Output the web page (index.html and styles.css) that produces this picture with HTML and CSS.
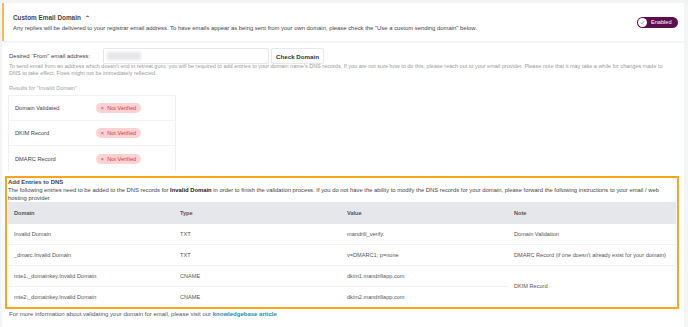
FILE: index.html
```html
<!doctype html>
<html lang="en">
<head>
    <meta charset="UTF-8">
    <title>Custom Email Domain</title>
    <link rel="stylesheet" href="styles.css">
</head>
<body>
    <div class="card top">
        <div class="top-text">
            <div class="title">Custom Email Domain <span class="caret">&#x2303;</span></div>
            <p class="lead">Any replies will be delivered to your registrar email address. To have emails appear as being sent from your own domain, please check the "Use a custom sending domain" below.</p>
        </div>
        <div class="toggle">
            <span class="knob">
                <svg width="7" height="7" viewBox="0 0 8 8"><path d="M2 4.2 L3.4 5.6 L6 2.6" fill="none" stroke="#9a8aa0" stroke-width="0.9"/></svg>
            </span>
            <span>Enabled</span>
        </div>
    </div>

    <div class="card panel">
        <div class="from-row">
            <label>Desired &ldquo;From&rdquo; email address:</label>
            <div class="input"><span class="blur"></span></div>
            <button class="btn">Check Domain</button>
        </div>
        <p class="help">To send email from an address which doesn't end in retreat.guru, you will be required to add entries to your domain name's DNS records. If you are not sure how to do this, please reach out to your email provider. Please note that it may take a while for changes made to DNS to take effect. Fixes might not be immediately reflected.</p>
        <p class="results-for">Results for "Invalid Domain"</p>

        <ul class="results">
            <li><span class="label">Domain Validated</span><span class="badge">&times;&nbsp; Not Verified</span></li>
            <li><span class="label">DKIM Record</span><span class="badge">&times;&nbsp; Not Verified</span></li>
            <li><span class="label">DMARC Record</span><span class="badge">&times;&nbsp; Not Verified</span></li>
        </ul>

        <div class="dns">
            <div class="dns-title">Add Entries to DNS</div>
            <p class="dns-desc">The following entries need to be added to the DNS records for <b>Invalid Domain</b> in order to finish the validation process. If you do not have the ability to modify the DNS records for your domain, please forward the following instructions to your email / web hosting provider.</p>
            <table>
                <thead>
                    <tr><th class="c1">Domain</th><th class="c2">Type</th><th class="c3">Value</th><th>Note</th></tr>
                </thead>
                <tbody>
                    <tr><td>Invalid Domain</td><td>TXT</td><td>mandrill_verify.</td><td>Domain Validation</td></tr>
                    <tr><td>_dmarc.Invalid Domain</td><td>TXT</td><td>v=DMARC1; p=none</td><td>DMARC Record (if one doesn't already exist for your domain)</td></tr>
                    <tr><td>mte1._domainkey.Invalid Domain</td><td>CNAME</td><td>dkim1.mandrillapp.com</td><td rowspan="2">DKIM Record</td></tr>
                    <tr><td>mte2._domainkey.Invalid Domain</td><td>CNAME</td><td>dkim2.mandrillapp.com</td></tr>
                </tbody>
            </table>
        </div>
        <p class="more">For more information about validating your domain for email, please visit our <a href="">knowledgebase article</a></p>
    </div>
</body>
</html>
```

FILE: styles.css
```css
*{
    margin:0;
    padding:0;
    box-sizing:border-box;
}
html,body{
    height:100%;
}
body{
    background:#f3f4f6;
    padding:3px 4px 0 2px;
    font-family:"Liberation Sans", Arial, sans-serif;
    font-size:6px;
    color:#333;
    overflow:hidden;
}
ul{
    list-style:none;
}
.card{
    background:#fff;
}
.top{
    display:flex;
    align-items:center;
    justify-content:space-between;
    height:38px;
    border-left:2px solid #f7b955;
    padding:0 6px 0 9px;
}
.title{
    font-size:6.4px;
    font-weight:bold;
    color:#444;
    margin-bottom:4px;
}
.caret{
    font-size:6px;
    margin-left:2px;
}
.lead{
    font-size:5.9px;
    color:#444;
}
.toggle{
    display:flex;
    align-items:center;
    gap:4px;
    height:11px;
    width:41px;
    padding:0 1px;
    border-radius:6px;
    background:#5a0e4e;
    color:#fff;
    font-size:5.6px;
}
.knob{
    display:flex;
    align-items:center;
    justify-content:center;
    width:9px;
    height:9px;
    border-radius:50%;
    background:#fff;
}
.panel{
    margin-top:2px;
    height:300px;
    padding:5px 4px 0 4px;
}
.from-row{
    display:flex;
    align-items:center;
    gap:2px;
    padding-left:3px;
}
.from-row label{
    width:92px;
    color:#444;
}
.input{
    width:166px;
    height:16px;
    border:1px solid #e5e7eb;
    border-radius:2px;
    padding:3px 3px;
}
.blur{
    display:block;
    width:34px;
    height:8px;
    background:#e6e6ea;
    filter:blur(1.5px);
}
.btn{
    height:16px;
    width:53px;
    border:1px solid #e5e7eb;
    border-radius:2px;
    background:#fff;
    font-family:inherit;
    font-size:6.2px;
    font-weight:bold;
    color:#333;
}
.help{
    margin-top:-1px;
    padding:0 6px 0 3px;
    font-size:5.5px;
    line-height:7px;
    color:#9a9a9a;
}
.results-for{
    margin-top:8px;
    padding-left:3px;
    font-size:5.5px;
    color:#a5a5a5;
}
.results{
    width:168px;
    margin:4px 0 0 2px;
    border:1px solid #eef0f2;
    border-bottom:0;
}
.results li{
    display:flex;
    align-items:center;
    height:25px;
    padding-left:6px;
    border-bottom:1px solid #f1f2f4;
}
.results li:last-child{
    border-bottom:0;
}
.results .label{
    width:81px;
    color:#444;
    font-size:5.7px;
}
.badge{
    display:inline-block;
    width:45px;
    height:10px;
    line-height:10px;
    border-radius:5px;
    background:#fcd2d3;
    color:#d23a3a;
    text-align:center;
    font-size:5.6px;
}
.dns{
    margin:5px 0 0 -1px;
    width:674px;
    border:2px solid #f9a61a;
    padding:1px 1px 0 1px;
}
.dns-title{
    font-weight:bold;
    color:#444;
    line-height:7px;
}
.dns-desc{
    font-size:5.85px;
    line-height:8px;
    color:#444;
}
.dns-desc b{
    color:#222;
}
table{
    width:100%;
    border-collapse:collapse;
    font-size:5.6px;
}
th{
    height:22px;
    background:#e5e7eb;
    text-align:left;
    padding-left:6px;
    font-weight:bold;
    color:#555;
}
td{
    height:20.7px;
    padding-left:6px;
    color:#555;
    border-top:1px solid #f2f3f5;
}
tbody tr:first-child td{
    border-top:0;
}
.c1{ width:166px; }
.c2{ width:167px; }
.c3{ width:167px; }
.more{
    margin-top:2px;
    padding-left:3px;
    color:#555;
}
.more a{
    color:#1c8bb5;
    font-weight:bold;
    text-decoration:none;
}
```
